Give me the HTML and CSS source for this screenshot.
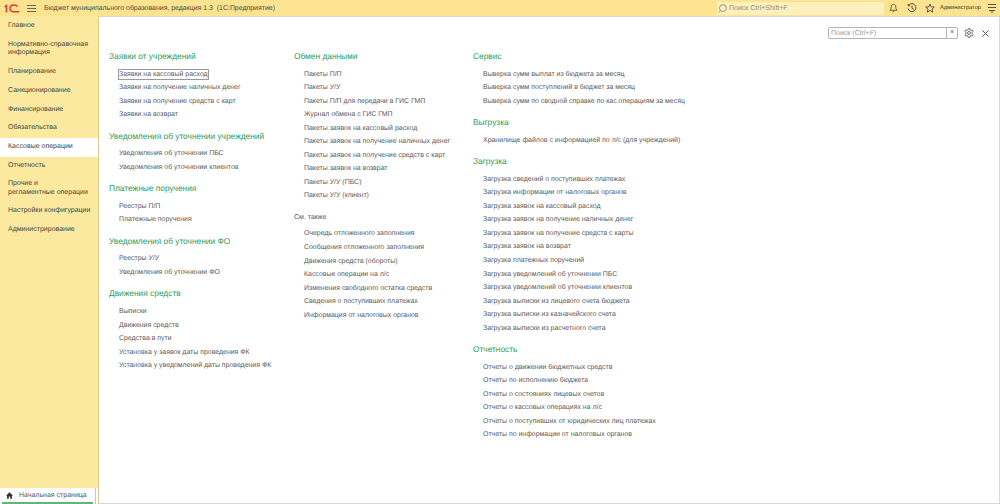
FILE: index.html
```html
<!DOCTYPE html>
<html lang="ru">
<head>
    <meta charset="UTF-8">
    <meta name="viewport" content="width=device-width, initial-scale=1.0">
    <title>Бюджет муниципального образования</title>
    <link rel="stylesheet" href="styles.css">
</head>
<body>
    <!-- Top bar -->
    <header class="topbar">
        <svg class="logo" viewBox="0 0 15 9" width="15" height="9"><path d="M.5 3L2.500 1.500V8.500M13.500 2.500C12.800 1.300 11.500 1 10 1C7.500 1 6 2.500 6 4.500C6 6.500 7.500 7.800 10 7.800H15" stroke="#dd3a2c" stroke-width="1.500" fill="none"/></svg>
        <svg class="burger" viewBox="0 0 9 7" width="9" height="7"><path d="M0 .5h9M0 3.500h9M0 6.500h9" stroke="#666" fill="none"/></svg>
        <span class="app-title">Бюджет муниципального образования, редакция 1.3&nbsp; (1С:Предприятие)</span>
        <div class="global-search">
            <svg viewBox="0 0 10 10" width="9" height="9"><circle cx="5.500" cy="4.500" r="3.800" stroke="#888" fill="none"/><path d="M2.800 7.300L.8 9.500" stroke="#888"/></svg>
            <span>Поиск Ctrl+Shift+F</span>
        </div>
        <svg class="bell" viewBox="0 0 10 10" width="9" height="10"><path d="M5 1C3 1 2.500 2.500 2.500 4C2.500 6 1.500 7 1 7.500H9C8.500 7 7.500 6 7.500 4C7.500 2.500 7 1 5 1ZM4 8.500C4.300 9.300 5.700 9.300 6 8.500" stroke="#444" fill="none" stroke-width=".9"/></svg>
        <svg class="history" viewBox="0 0 10 10" width="10" height="10"><path d="M1.500 2.500A4 4 0 1 1 1 5.500M1.200 .9V2.800H3.100M5 2.500V5.200L6.800 6.300" stroke="#444" fill="none" stroke-width=".9"/></svg>
        <svg class="star" viewBox="0 0 10 10" width="10" height="10"><path d="M5 1L6.200 3.800 9.300 4.100 7 6.100 7.700 9.100 5 7.500 2.300 9.100 3 6.100 .7 4.100 3.800 3.800Z" stroke="#444" fill="none" stroke-width=".9"/></svg>
        <span class="user">Администратор</span>
        <svg class="top-menu" viewBox="0 0 8 9" width="8" height="9"><path d="M0 .5h8M0 3.500h8M1 6.500h6" stroke="#555" fill="none"/><path d="M2.500 7.500h3L4 9z" fill="#555"/></svg>
    </header>

    <div class="workspace">
        <!-- Left sections panel -->
        <nav class="sidebar">
            <div class="nav-list">
                <a class="nav-item">Главное</a>
                <a class="nav-item two-lines">Нормативно-справочная<br>информация</a>
                <a class="nav-item">Планирование</a>
                <a class="nav-item">Санкционирование</a>
                <a class="nav-item">Финансирование</a>
                <a class="nav-item">Обязательства</a>
                <a class="nav-item active">Кассовые операции</a>
                <a class="nav-item">Отчетность</a>
                <a class="nav-item two-lines">Прочие и<br>регламентные операции</a>
                <a class="nav-item">Настройки конфигурации</a>
                <a class="nav-item">Администрирование</a>
            </div>
            <div class="home-strip">
                <div class="home-tab">
                    <div class="home-label">
                        <svg viewBox="0 0 10 10" width="7" height="7"><path d="M5 .5L0 5.200H1.500V9.500H4V6.500H6V9.500H8.500V5.200H10Z" fill="#333"/></svg>
                        <span>Начальная страница</span>
                    </div>
                    <div class="home-line"></div>
                </div>
            </div>
        </nav>

        <main class="content">
            <div class="content-tools">
                <div class="search-box">
                    <span class="search-text">Поиск (Ctrl+F)</span>
                    <span class="search-clear">×</span>
                </div>
                <svg class="gear" viewBox="0 0 12 12" width="10" height="10"><circle cx="6" cy="6" r="1.800" stroke="#555" fill="none"/><path d="M5 .8H7L7.300 2.300 8.500 2.900 9.900 2.300 10.900 4 9.800 5.100V6.900L10.900 8 9.900 9.700 8.500 9.100 7.300 9.700 7 11.200H5L4.700 9.700 3.500 9.100 2.100 9.700 1.100 8 2.200 6.900V5.100L1.100 4 2.100 2.300 3.500 2.900 4.700 2.300Z" stroke="#555" fill="none"/></svg>
                <svg class="close" viewBox="0 0 7 7" width="7" height="7"><path d="M.5 .5L6.500 6.500M6.500 .5L.5 6.500" stroke="#555" fill="none"/></svg>
            </div>

            <div class="columns">
                <section class="col col-1">
                    <h2>Заявки от учреждений</h2>
                    <a class="focused">Заявки на кассовый расход</a>
                    <a>Заявки на получение наличных денег</a>
                    <a>Заявки на получение средств с карт</a>
                    <a>Заявки на возврат</a>
                    <h2>Уведомления об уточнении учреждений</h2>
                    <a>Уведомления об уточнении ПБС</a>
                    <a>Уведомления об уточнении клиентов</a>
                    <h2>Платежные поручения</h2>
                    <a>Реестры П/П</a>
                    <a>Платежные поручения</a>
                    <h2>Уведомления об уточнении ФО</h2>
                    <a>Реестры У/У</a>
                    <a>Уведомления об уточнении ФО</a>
                    <h2>Движения средств</h2>
                    <a>Выписки</a>
                    <a>Движения средств</a>
                    <a>Средства в пути</a>
                    <a>Установка у заявок даты проведения ФК</a>
                    <a>Установка у уведомлений даты проведения ФК</a>
                </section>

                <section class="col col-2">
                    <h2>Обмен данными</h2>
                    <a>Пакеты П/П</a>
                    <a>Пакеты У/У</a>
                    <a>Пакеты П/П для передачи в ГИС ГМП</a>
                    <a>Журнал обмена с ГИС ГМП</a>
                    <a>Пакеты заявок на кассовый расход</a>
                    <a>Пакеты заявок на получение наличных денег</a>
                    <a>Пакеты заявок на получение средств с карт</a>
                    <a>Пакеты заявок на возврат</a>
                    <a>Пакеты У/У (ПБС)</a>
                    <a>Пакеты У/У (клиент)</a>
                    <h3>См. также</h3>
                    <a>Очередь отложенного заполнения</a>
                    <a>Сообщения отложенного заполнения</a>
                    <a>Движения средств (обороты)</a>
                    <a>Кассовые операции на л/с</a>
                    <a>Изменения свободного остатка средств</a>
                    <a>Сведения о поступивших платежах</a>
                    <a>Информация от налоговых органов</a>
                </section>

                <section class="col col-3">
                    <h2>Сервис</h2>
                    <a>Выверка сумм выплат из бюджета за месяц</a>
                    <a>Выверка сумм поступлений в бюджет за месяц</a>
                    <a>Выверка сумм по сводной справке по кас.операциям за месяц</a>
                    <h2>Выгрузка</h2>
                    <a>Хранилище файлов с информацией по л/с (для учреждений)</a>
                    <h2>Загрузка</h2>
                    <a>Загрузка сведений о поступивших платежах</a>
                    <a>Загрузка информации от налоговых органов</a>
                    <a>Загрузка заявок на кассовый расход</a>
                    <a>Загрузка заявок на получение наличных денег</a>
                    <a>Загрузка заявок на получение средств с карты</a>
                    <a>Загрузка заявок на возврат</a>
                    <a>Загрузка платежных поручений</a>
                    <a>Загрузка уведомлений об уточнении ПБС</a>
                    <a>Загрузка уведомлений об уточнении клиентов</a>
                    <a>Загрузка выписки из лицевого счета бюджета</a>
                    <a>Загрузка выписки из казначейского счета</a>
                    <a>Загрузка выписки из расчетного счета</a>
                    <h2>Отчетность</h2>
                    <a>Отчеты о движении бюджетных средств</a>
                    <a>Отчеты по исполнению бюджета</a>
                    <a>Отчеты о состояниях лицевых счетов</a>
                    <a>Отчеты о кассовых операциях на л/с</a>
                    <a>Отчеты о поступивших от юридических лиц платежах</a>
                    <a>Отчеты по информации от налоговых органов</a>
                </section>
            </div>
        </main>
    </div>
</body>
</html>
```

FILE: styles.css
```css
* {
    margin: 0;
    padding: 0;
    box-sizing: border-box;
}

body {
    width: 1000px;
    height: 504px;
    overflow: hidden;
    font-family: 'Liberation Sans', Arial, sans-serif;
    font-size: 7px;
    text-rendering: geometricPrecision;
    color: #5a5a5a;
    background-color: #fbe9a0;
    display: flex;
    flex-direction: column;
}

/* Top bar */
.topbar {
    height: 16px;
    flex: none;
    display: flex;
    align-items: center;
    background-color: #fbe38f;
    padding: 0 4px;
}

.burger {
    margin-left: 8px;
}

.app-title {
    flex: 1;
    margin-left: 8px;
    font-size: 6.95px;
    color: #4a4a3c;
}

.global-search {
    width: 167px;
    height: 13px;
    display: flex;
    align-items: center;
    gap: 2px;
    padding-left: 1px;
    background-color: #fdf0bd;
    color: #8d8d80;
}

.bell {
    margin-left: 5.5px;
}

.history {
    margin-left: 8.5px;
}

.star {
    margin-left: 8px;
}

.user {
    margin-left: 5px;
    font-size: 5.7px;
    color: #333;
}

.top-menu {
    margin-left: 7px;
}

/* Workspace */
.workspace {
    flex: 1;
    display: flex;
    min-height: 0;
}

.sidebar {
    width: 99px;
    flex: none;
    display: flex;
    flex-direction: column;
    border-right: 1px solid #d8cb94;
}

.nav-list {
    flex: 1;
    padding-top: 1.4px;
}

.nav-item {
    display: block;
    height: 18.7px;
    padding: 5px 0 0 8px;
    line-height: 8.4px;
    white-space: nowrap;
    color: #46463c;
}

.nav-item.two-lines {
    height: 27.1px;
}

.nav-item.active {
    background-color: #fff;
}

.home-strip {
    height: 16px;
    background-color: #fff;
}

.home-tab {
    width: 96px;
    height: 16px;
    display: flex;
    flex-direction: column;
    border-right: 1px solid #c8c8c8;
}

.home-label {
    flex: 1;
    display: flex;
    align-items: center;
    gap: 6px;
    padding-left: 6px;
}

.home-line {
    height: 2px;
    margin: 0 2px;
    background-color: #5cb878;
}

.content {
    flex: 1;
    background-color: #fff;
    border: 1px solid #d8d8d8;
    border-left: 0;
    min-width: 0;
}

.content-tools {
    height: 34px;
    display: flex;
    justify-content: flex-end;
    align-items: flex-start;
    padding: 10px 10px 0 0;
}

.search-box {
    width: 130px;
    height: 12px;
    display: flex;
    align-items: center;
    border: 1px solid #b4b4b4;
    border-radius: 2px;
    background-color: #fff;
    color: #9a9a9a;
}

.search-text {
    flex: 1;
    padding-left: 2px;
}

.search-clear {
    width: 11px;
    height: 10px;
    line-height: 10px;
    text-align: center;
    border-left: 1px solid #b4b4b4;
    color: #555;
}

.gear {
    margin: 1px 0 0 6px;
}

.close {
    margin: 2.5px 0 0 8px;
}

.columns {
    display: flex;
    padding-left: 10px;
}

.col-1 {
    width: 185px;
}

.col-2 {
    width: 179px;
}

.col h2 {
    font-size: 8.35px;
    font-weight: normal;
    color: #2a9d63;
    line-height: 11px;
    padding-top: 9px;
    margin-bottom: 5.5px;
    white-space: nowrap;
}

.col h2:first-child {
    padding-top: 0;
}

.col h3 {
    font-size: 7px;
    font-weight: normal;
    line-height: 11px;
    padding-top: 9px;
    margin-bottom: 4.5px;
}

.col a {
    display: block;
    width: max-content;
    margin-left: 10px;
    font-size: 6.95px;
    line-height: 13.55px;
    white-space: nowrap;
}

.col a.focused {
    position: relative;
}

.col a.focused::after {
    content: "";
    position: absolute;
    inset: 1px -1px;
    border: 1px solid #9a9a9a;
}
```
